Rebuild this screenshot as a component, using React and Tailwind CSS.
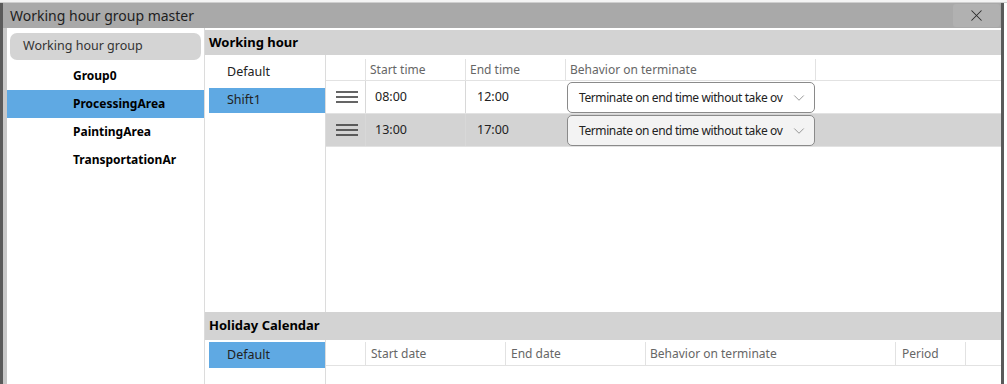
import { ChevronDown, X } from 'lucide-react';

const groups = ['Group0', 'ProcessingArea', 'PaintingArea', 'TransportationAr'];

function Hamburger() {
  return (
    <svg width="22" height="12" viewBox="0 0 22 12" className="text-[#333]">
      <path d="M0 1h22M0 6h22M0 11h22" stroke="currentColor" strokeWidth="1.3" />
    </svg>
  );
}

function Dropdown({ bg }) {
  return (
    <div className={`mx-px my-px flex h-[31px] items-center rounded-[5px] border border-[#8a8a8a] pl-[11px] pr-[6px] ${bg}`}>
      <span className="whitespace-nowrap text-[12px] tracking-[-0.4px] text-[#222]">
        Terminate on end time without take ov
      </span>
      <ChevronDown size={18} strokeWidth={1} className="ml-auto text-[#777]" />
    </div>
  );
}

function ShiftRow({ start, end, bg, ddBg }) {
  return (
    <div className={`flex h-[33px] border-b border-[#e2e2e2] ${bg}`}>
      <div className="flex w-[40px] items-center justify-center border-r border-[#d8d8d8] pl-[3px]">
        <Hamburger />
      </div>
      <div className="flex w-[100px] items-center border-r border-[#d8d8d8] pl-[9px] text-[12.5px] text-[#222]">{start}</div>
      <div className="flex w-[100px] items-center pl-[11px] text-[12.5px] text-[#222]">{end}</div>
      <div className="w-[250px]">
        <Dropdown bg={ddBg} />
      </div>
      <div className="flex-1" />
    </div>
  );
}

export default function App() {
  return (
    <div className="h-[384px] w-[1007px] overflow-hidden bg-white font-['Noto_Sans',sans-serif]">
      <div className="h-[3px] border-b border-[#cfcfcf] bg-[#f4f4f4]" />
      <div className="flex h-[381px] w-[1004px] flex-col border-l-[3px] border-r-[3px] border-[#5a5a5a]">
        {/* title bar */}
        <div className="flex h-[25px] items-center justify-between bg-[#a9a9a9] pl-[7px] pr-[1px]">
          <span className="text-[14px] text-[#1e1e1e]">Working hour group master</span>
          <div className="flex h-[23px] w-[47px] items-center justify-center rounded-[3px] bg-[#b1b1b1]">
            <X size={19} strokeWidth={1.3} className="text-[#2a2a2a]" />
          </div>
        </div>
        {/* body */}
        <div className="flex flex-1 border-l-[4px] border-[#c8c8c8] bg-white">
          {/* left tree */}
          <div className="flex w-[198px] flex-col border-r border-[#dcdcdc] pt-[5px]">
            <div className="mx-[3px] flex h-[27px] items-center rounded-[7px] bg-[#d4d4d4] pl-[13px] text-[12.5px] text-[#333]">
              Working hour group
            </div>
            <div className="mt-[2px] flex flex-col">
              {groups.map((g) => (
                <div
                  key={g}
                  className={`flex h-[28px] items-center pl-[66px] text-[12px] font-bold text-black ${g === 'ProcessingArea' ? 'bg-[#5fa9e3]' : ''}`}
                >
                  {g}
                </div>
              ))}
            </div>
          </div>
          {/* right */}
          <div className="flex flex-1 flex-col pt-[2px]">
            <div className="flex h-[25px] items-center bg-[#d3d3d3] pl-[4px] text-[13px] font-bold text-black">Working hour</div>
            <div className="flex flex-1">
              <div className="flex w-[121px] flex-col border-r border-[#dcdcdc] pl-[4px] pt-[1px]">
                <div className="flex h-[32px] items-center pl-[18px] text-[12.5px] text-[#222]">Default</div>
                <div className="flex h-[25px] items-center bg-[#5fa9e3] pl-[18px] text-[12.5px] text-[#222]">Shift1</div>
              </div>
              <div className="flex flex-1 flex-col">
                <div className="flex h-[26px] border-b border-[#e2e2e2] pt-[4px] text-[12px] text-[#666]">
                  <div className="w-[40px] border-r border-[#e2e2e2]" />
                  <div className="flex w-[100px] items-center border-r border-[#e2e2e2] pl-[4px]">Start time</div>
                  <div className="flex w-[100px] items-center border-r border-[#e2e2e2] pl-[4px]">End time</div>
                  <div className="flex w-[250px] items-center border-r border-[#e2e2e2] pl-[4px]">Behavior on terminate</div>
                  <div className="flex-1" />
                </div>
                <ShiftRow start="08:00" end="12:00" bg="bg-white" ddBg="bg-white" />
                <ShiftRow start="13:00" end="17:00" bg="bg-[#d3d3d3]" ddBg="bg-[#f3f3f3]" />
              </div>
            </div>
            <div className="flex h-[28px] items-center bg-[#d3d3d3] pl-[4px] text-[13px] font-bold text-black">Holiday Calendar</div>
            <div className="flex h-[44px]">
              <div className="flex w-[121px] flex-col border-r border-[#dcdcdc] pl-[4px] pt-[2px]">
                <div className="flex h-[26px] items-center bg-[#5fa9e3] pl-[18px] text-[12.5px] text-[#222]">Default</div>
              </div>
              <div className="flex flex-1 flex-col">
                <div className="flex h-[26px] border-b border-[#e2e2e2] pt-[2px] text-[12px] text-[#666]">
                  <div className="w-[40px] border-r border-[#e2e2e2]" />
                  <div className="flex w-[140px] items-center border-r border-[#e2e2e2] pl-[5px]">Start date</div>
                  <div className="flex w-[140px] items-center border-r border-[#e2e2e2] pl-[5px]">End date</div>
                  <div className="flex w-[250px] items-center border-r border-[#e2e2e2] pl-[4px]">Behavior on terminate</div>
                  <div className="flex w-[70px] items-center border-r border-[#e2e2e2] pl-[6px]">Period</div>
                  <div className="flex-1" />
                </div>
              </div>
            </div>
          </div>
        </div>
      </div>
    </div>
  );
}
